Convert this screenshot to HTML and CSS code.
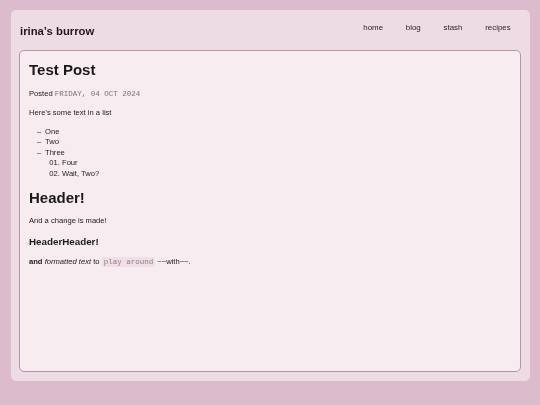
FILE: index.html
```html
<!DOCTYPE html>
<html lang="en">
<head>
<meta charset="utf-8">
<title>irina’s burrow</title>
<link rel="stylesheet" href="styles.css">
</head>
<body>
<div class="panel">
  <header class="site-header">
    <div class="site-title">irina’s burrow</div>
    <nav class="nav">
      <a href="#">home</a>
      <a href="#">blog</a>
      <a href="#">stash</a>
      <a href="#">recipes</a>
    </nav>
  </header>
  <main class="post">
    <h1 class="post-title">Test Post</h1>
    <p class="meta">Posted <span class="date">FRIDAY, 04 OCT 2024</span></p>
    <p>Here's some text in a list</p>
    <ul class="dash-list">
      <li>One</li>
      <li>Two</li>
      <li>Three
        <ol class="num-list">
          <li>Four</li>
          <li>Wait, Two?</li>
        </ol>
      </li>
    </ul>
    <h2 class="h2">Header!</h2>
    <p>And a change is made!</p>
    <h3 class="h3">HeaderHeader!</h3>
    <p><strong>and</strong> <em>formatted text</em> to <code class="code">play around</code> ~~with~~.</p>
  </main>
</div>
</body>
</html>
```
FILE: styles.css
```css
html, body {
  margin: 0;
  padding: 0;
}
body {
  background: #dcbccc;
  font-family: "Liberation Sans", Arial, sans-serif;
  color: #1c1c1c;
  padding: 10px 10px 24px 11px;
  width: 540px;
  height: 405px;
  box-sizing: border-box;
}
.panel {
  background: #eedce5;
  border-radius: 5px;
  height: 371px;
  width: 519px;
  box-sizing: border-box;
  padding: 0 9px 9px 8px;
  display: flex;
  flex-direction: column;
  will-change: transform;
}
.site-header {
  height: 40px;
  display: flex;
  align-items: center;
  justify-content: space-between;
  flex-shrink: 0;
}
.site-title {
  font-size: 11.3px;
  font-weight: bold;
  color: #24161f;
  padding-left: 1px;
  padding-top: 2px;
}
.nav {
  display: flex;
  margin-right: -1px;
  margin-top: -6px;
}
.nav a {
  font-size: 7.9px;
  color: #2e2129;
  text-decoration: none;
  padding: 0 11.4px;
}
.post {
  flex: 1;
  background: #f7ecf0;
  border: 1px solid #b893a7;
  border-radius: 5px;
  padding: 9px 9px;
  font-size: 7.6px;
  line-height: 10.5px;
}
.post p {
  margin: 8.5px 0;
}
.post-title {
  font-size: 15px;
  line-height: 20px;
  margin: 0 0 8px 0;
  color: #1a1a1a;
}
.meta {
  color: #1c1c1c;
}
.date {
  font-family: "Liberation Mono", "Courier New", monospace;
  font-size: 7.5px;
  color: #77727a;
}
.dash-list {
  list-style: none;
  margin: 8px 0 8.5px 0;
  padding-left: 8px;
}
.dash-list > li::before {
  content: "–";
  display: inline-block;
  width: 8px;
}
.num-list {
  list-style: decimal-leading-zero;
  margin: 0;
  padding-left: 25px;
}
.h2 {
  font-size: 15px;
  line-height: 20px;
  margin: 8px 0 8.5px 0;
  color: #1a1a1a;
}
.h3 {
  font-size: 9.8px;
  line-height: 13px;
  margin: 8px 0 8px 0;
  color: #1a1a1a;
}
.code {
  font-family: "Liberation Mono", "Courier New", monospace;
  font-size: 7.5px;
  color: #8f7c86;
  background: #f0dfe6;
  border-radius: 2px;
  padding: 1px 2px;
}
```
